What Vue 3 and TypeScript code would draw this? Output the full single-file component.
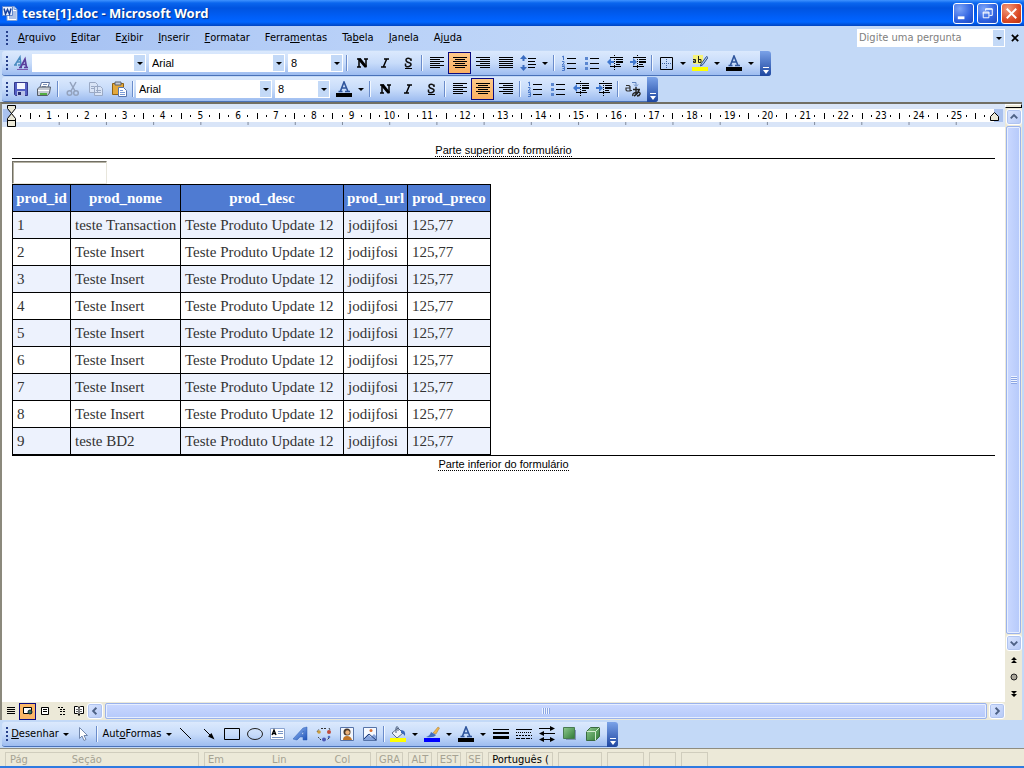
<script setup lang="ts">
interface Menu { label: string; key: number }
interface Item {
  kind: 'btn' | 'combo' | 'sep' | 'text'
  icon?: string
  label?: string
  value?: string
  size?: string
  drop?: boolean
  on?: boolean
  off?: boolean
  key?: number
}
interface Bar { id: string; name: string; items: Item[] }

const menus: Menu[] = [
  { label: 'Arquivo', key: 0 },
  { label: 'Editar', key: 0 },
  { label: 'Exibir', key: 1 },
  { label: 'Inserir', key: 0 },
  { label: 'Formatar', key: 0 },
  { label: 'Ferramentas', key: 5 },
  { label: 'Tabela', key: 2 },
  { label: 'Janela', key: 0 },
  { label: 'Ajuda', key: 2 },
]

const b = (icon: string, label: string, extra: Partial<Item> = {}): Item => ({ kind: 'btn', icon, label, ...extra })
const sep: Item = { kind: 'sep' }
const combo = (label: string, value: string, size: string): Item => ({ kind: 'combo', label, value, size })

const bars: Bar[] = [
  {
    id: 'format', name: 'Formatação', items: [
      b('styles', 'Estilos'), combo('Estilo', '', 'style'), combo('Fonte', 'Arial', 'font'), combo('Tamanho', '8', 'points'), sep,
      b('bold', 'Negrito'), b('italic', 'Itálico'), b('under', 'Sublinhado'), sep,
      b('left', 'Esquerda'), b('center', 'Centralizar', { on: true }), b('right', 'Direita'), b('justify', 'Justificar'),
      b('spacing', 'Espaçamento', { drop: true }), sep,
      b('numbers', 'Numeração'), b('bullets', 'Marcadores'), b('outdent', 'Diminuir recuo'), b('indent', 'Aumentar recuo'), sep,
      b('border', 'Bordas', { drop: true }), b('mark', 'Realce', { drop: true }), b('color', 'Cor da fonte', { drop: true }),
    ],
  },
  {
    id: 'custom', name: 'Personalizada', items: [
      b('save', 'Salvar'), b('print', 'Imprimir'), sep,
      b('cut', 'Recortar', { off: true }), b('copy', 'Copiar', { off: true }), b('paste', 'Colar'), sep,
      combo('Fonte', 'Arial', 'font'), combo('Tamanho', '8', 'points'), b('color', 'Cor da fonte', { drop: true }), sep,
      b('bold', 'Negrito'), b('italic', 'Itálico'), b('under', 'Sublinhado'), sep,
      b('left', 'Esquerda'), b('center', 'Centralizar', { on: true }), b('right', 'Direita'), sep,
      b('numbers', 'Numeração'), b('bullets', 'Marcadores'), b('outdent', 'Diminuir recuo'), b('indent', 'Aumentar recuo'), sep,
      b('translate', 'Traduzir'),
    ],
  },
]

const drawing: Item[] = [
  { kind: 'text', label: 'Desenhar', key: 0, size: 'short' }, b('pointer', 'Selecionar'), sep,
  { kind: 'text', label: 'AutoFormas', key: 3, size: 'long' },
  b('line', 'Linha'), b('arrow', 'Seta'), b('rect', 'Retângulo'), b('oval', 'Elipse'), b('textbox', 'Caixa de texto'),
  b('wordart', 'WordArt'), b('diagram', 'Diagrama'), b('clip', 'Clip-art'), b('picture', 'Imagem'), sep,
  b('fill', 'Preenchimento', { drop: true }), b('brush', 'Cor da linha', { drop: true }), b('color', 'Cor da fonte', { drop: true }),
  b('weights', 'Estilo da linha'), b('dashes', 'Tracejado'), b('arrows', 'Estilo da seta'), b('shadow', 'Sombra'), b('cube', '3D'),
]

const views = ['normal', 'web', 'page', 'outline', 'book']
const viewNames = ['Normal', 'Layout da Web', 'Impressão', 'Tópicos', 'Leitura']

const marks: string[] = []
for (let i = 1; i < 104; i++) {
  const q = i % 4
  marks.push(q === 0 ? String(i / 4) : q === 2 ? 'tick' : 'dot')
}
const tabs = Array.from({ length: 20 }, (_, i) => `${((i + 1) * 125) / 26}%`)

const heads = ['prod_id', 'prod_nome', 'prod_desc', 'prod_url', 'prod_preco']
const rows = Array.from({ length: 9 }, (_, i) => [
  String(i + 1),
  i === 0 ? 'teste Transaction' : i === 8 ? 'teste BD2' : 'Teste Insert',
  'Teste Produto Update 12',
  'jodijfosi',
  '125,77',
])
</script>

<template>
  <div class="window">
    <svg class="sprite" width="0" height="0" aria-hidden="true">
      <defs>
        <linearGradient id="gG" x1="0" y1="0" x2="1" y2="1"><stop offset="0" stop-color="#8fc98f" /><stop offset="1" stop-color="#2e7a36" /></linearGradient>
        <linearGradient id="gW" x1="0" y1="0" x2="1" y2="1"><stop offset="0" stop-color="#9ec4f8" /><stop offset="1" stop-color="#1c50b8" /></linearGradient>
      </defs>
      <symbol id="word" viewBox="0 0 16 16">
        <path d="M5 1.500h7l3 3v11H5z" fill="#fff" stroke="#7fa0d8" /><path d="M12 1.500v3h3" fill="#d5e2f8" stroke="#7fa0d8" />
        <path d="M11 7h3M11 9h3M7 13h7M7 11h7" stroke="#5b83cc" /><path d="M.5 1.500h10v9H.5z" fill="#e8f0ff" stroke="#5f86cc" />
        <path d="M2 3.500l1.500 5.500L5.500 4.500 7.500 9 9 3.500" fill="none" stroke="#17419c" stroke-width="1.500" />
      </symbol>
      <symbol id="styles" viewBox="0 0 16 16">
        <path d="M1 10h3M5 10h3M2 10L7 2l1 8M4 7h4" fill="none" stroke="#4a8cc0" stroke-width="1.500" />
        <path d="M6 12.500h3M11 12.500h4M7.500 12.500L12 4l1.500 8.500M9.500 9.500h4" fill="none" stroke="#5a3d9c" stroke-width="1.700" />
        <path d="M4 14.500h11" stroke="#7a5ab0" />
      </symbol>
      <symbol id="bold" viewBox="0 0 16 16"><path d="M3 4h4M10 4h4M3 12h4M5 4v8M12 4v8" stroke="#000" fill="none" stroke-width="1.500" /><path d="M4 3.500h3l5.500 7v2h-2L5 6z" /></symbol>
      <symbol id="italic" viewBox="0 0 16 16"><path d="M7 4h5M4 12h5M9.700 4L6.300 12" stroke="#000" stroke-width="1.500" fill="none" /></symbol>
      <symbol id="under" viewBox="0 0 16 16"><path d="M11 6V3.500M5.500 11V8.500M11 5Q10 3.200 8.300 3.200 6 3.200 6 5t2.500 2.400T11 9.500 8.300 11.700 5.500 9.800" stroke="#111" stroke-width="1.500" fill="none" /><path d="M5 13.500h7" stroke="#000" /></symbol>
      <symbol id="left" viewBox="0 0 16 16"><path d="M1 2.500h14M1 4.500h10M1 6.500h14M1 8.500h10M1 10.500h14M1 12.500h10" stroke="#000" /></symbol>
      <symbol id="center" viewBox="0 0 16 16"><path d="M1 2.500h14M3 4.500h10M1 6.500h14M3 8.500h10M1 10.500h14M3 12.500h10" stroke="#000" /></symbol>
      <symbol id="right" viewBox="0 0 16 16"><path d="M1 2.500h14M5 4.500h10M1 6.500h14M5 8.500h10M1 10.500h14M5 12.500h10" stroke="#000" /></symbol>
      <symbol id="justify" viewBox="0 0 16 16"><path d="M1 2.500h14M1 4.500h14M1 6.500h14M1 8.500h14M1 10.500h14M1 12.500h14" stroke="#000" /></symbol>
      <symbol id="spacing" viewBox="0 0 16 16"><path d="M8 3.500h8M8 6.500h7M8 9.500h8M8 12.500h7" stroke="#000" /><path d="M3.500 2v4M3.500 10v4" stroke="#3a6cc0" stroke-width="2" /><path d="M3.500 0L7 4H0zM3.500 16L7 12H0z" fill="#3a6cc0" /></symbol>
      <symbol id="numbers" viewBox="0 0 16 16"><path d="M6 3.500h9M6 8.500h9M6 13.500h9" stroke="#000" /><path d="M1 2l1.500-1v4M1 6.500h2v1.500l-2 2h3M1 11.500h2.500v4H1M1.500 13.500h2" fill="none" stroke="#4a78c8" /></symbol>
      <symbol id="bullets" viewBox="0 0 16 16"><path d="M6 3.500h9M6 8.500h9M6 13.500h9" stroke="#000" /><path d="M1 2h3v3H1zM1 7h3v3H1zM1 12h3v3H1z" fill="#5a86d0" /></symbol>
      <symbol id="outdent" viewBox="0 0 16 16"><path d="M3 2.500h13M9 4.500h7M9 9.500h4M3 11.500h11" stroke="#000" /><path d="M9 7h7" stroke="#000" stroke-width="2" /><path d="M7.500 0v16" stroke="#000" stroke-dasharray="1 1" /><path d="M0 7l4-4v3h3v2H4v3z" fill="#4078d0" /></symbol>
      <symbol id="indent" viewBox="0 0 16 16"><path d="M3 2.500h13M9 4.500h7M9 9.500h4M3 11.500h11" stroke="#000" /><path d="M9 7h7" stroke="#000" stroke-width="2" /><path d="M7.500 0v16" stroke="#000" stroke-dasharray="1 1" /><path d="M7 7L3 3v3H0v2h3v3z" fill="#4078d0" /></symbol>
      <symbol id="border" viewBox="0 0 16 16"><path d="M2.500 2.500h12v12h-12z" fill="none" stroke="#000" /><path d="M8.500 4v10M4 8.500h10" stroke="#3b5f9c" stroke-dasharray="1 1" /></symbol>
      <symbol id="mark" viewBox="0 0 16 16"><path d="M1 0h10v9H1z" fill="#f6f27a" /><path d="M1 4.500h2.500V7.500H1.500V6h2M6.500 1v6.500H9V4.500H6.500" fill="none" stroke="#222" /><path d="M9 9l5.500-7.500 1.500 1L11 9.500 8.500 11z" fill="#b9cbe6" stroke="#2c4f8c" /><path d="M0 12h16v4H0z" fill="#ffff00" /></symbol>
      <symbol id="color" viewBox="0 0 16 16"><path d="M2.500 10.500h4M9 10.500h5M4.500 10L8 1l4 9.500M6 7h4" fill="none" stroke="#2f559c" stroke-width="1.600" /><path d="M0 12h16v4H0z" /></symbol>
      <symbol id="save" viewBox="0 0 16 16"><path d="M1.500 1.500h13v13h-12l-1-1z" fill="#5460c4" stroke="#33388c" /><path d="M4 2h8v6H4z" fill="#f4f6ff" /><path d="M4 10h8v5H4z" fill="#b8c2e8" /><path d="M5 11h3v3H5z" fill="#252a70" /></symbol>
      <symbol id="print" viewBox="0 0 16 16"><path d="M5.500 1.500h8l-2 6h-8z" fill="#fff" stroke="#5a6f9c" /><path d="M7 3.500h4M6 5.500h4" stroke="#7c92bc" /><path d="M1.500 8l2-2h11l-1 6-2 2.500h-10z" fill="#c5cad2" stroke="#545c68" /><path d="M2 9.500h11" stroke="#fff" /><path d="M4 12h7v2H4z" fill="#54ad42" /></symbol>
      <symbol id="cut" viewBox="0 0 16 16"><path d="M5 1l5 9M11 1L6 10" stroke="#93a2bd" stroke-width="1.500" /><circle cx="4.500" cy="12" r="2.300" fill="none" stroke="#93a2bd" stroke-width="1.500" /><circle cx="11" cy="12" r="2.300" fill="none" stroke="#93a2bd" stroke-width="1.500" /></symbol>
      <symbol id="copy" viewBox="0 0 16 16"><path d="M1.500 1.500h6l2 2v8h-8zM6.500 5.500h6l2 2v7h-8z" fill="#d9e4f6" stroke="#9aa9c4" /><path d="M3 5.500h3M3 7.500h3M8 9.500h5M8 11.500h5" stroke="#9aa9c4" /></symbol>
      <symbol id="paste" viewBox="0 0 16 16"><path d="M1.500 2.500h11v11h-11z" fill="#e3a83c" stroke="#8e6114" /><path d="M4 1h6v3H4z" fill="#c7ccd6" stroke="#58606e" /><path d="M7.500 6.500h5l3 3v6h-8z" fill="#fff" stroke="#5875ad" /><path d="M9 9.500h3M9 11.500h5M9 13.500h5" stroke="#7b9bd6" /></symbol>
      <symbol id="translate" viewBox="0 0 16 16"><path d="M1 4.500h3l1 1V10H2L1 9V7h4M5 9.500h2" fill="none" stroke="#333" stroke-width="1.200" /><path d="M7 1.500h4v3M9 3.500l2 2 2-2" fill="none" stroke="#5e82bd" /><path d="M8 8.500h7M11 6v8M8 15q-1-3 3-3.500 4.500-1 4 1.500-.5 2-3 2M14 9q-1 4-5 6" fill="none" stroke="#222" stroke-width="1.400" /></symbol>
      <symbol id="pointer" viewBox="0 0 16 16"><path d="M4.500 1.500v11L7 10l2 4.500 2-1L9 9.500h3.500z" fill="#fff" stroke="#7288ad" /></symbol>
      <symbol id="line" viewBox="0 0 16 16"><path d="M2 2l11 11" stroke="#000" /></symbol>
      <symbol id="arrow" viewBox="0 0 16 16"><path d="M3 3l8 8" stroke="#000" /><path d="M13.500 13.500L7 10.500l3.500-3.500z" /></symbol>
      <symbol id="rect" viewBox="0 0 16 16"><path d="M.5 2.500h15v11H.5z" fill="none" stroke="#000" /></symbol>
      <symbol id="oval" viewBox="0 0 16 16"><ellipse cx="8" cy="8" rx="7.500" ry="5.500" fill="none" stroke="#222" /></symbol>
      <symbol id="textbox" viewBox="0 0 16 16"><path d="M.5 2.500h14v11H.5z" fill="#fff" stroke="#8aa3cf" /><path d="M2 9l2-5 2 5M3 7.500h2" fill="none" stroke="#000" stroke-width="1.300" /><path d="M8 5.500h5M8 7.500h5M2 11.500h11" stroke="#7894c4" /></symbol>
      <symbol id="wordart" viewBox="0 0 16 16"><path d="M0 13L10 2l4-1v13h-4v-3H7l-3 3zM8 8.500h2.500V5z" fill="url(#gW)" stroke="#2c5cb5" stroke-width=".5" fill-rule="evenodd" /></symbol>
      <symbol id="diagram" viewBox="0 0 16 16"><path d="M5 2.500h5M13 2l1 2M13 12l-2 2M5 14l-3-3M1 6l2-3" stroke="#333" stroke-dasharray="2 1" /><circle cx="3" cy="6" r="1.800" fill="#c99b3c" /><circle cx="13" cy="6" r="2" fill="#bf4c3c" /><circle cx="8" cy="13.500" r="2" fill="#4a57b5" /><circle cx="13" cy="11" r="1.300" fill="#5271c2" /></symbol>
      <symbol id="clip" viewBox="0 0 16 16"><path d="M1.500 1.500h13v13h-13z" fill="#f2f5fb" stroke="#5673a8" /><circle cx="8" cy="6" r="3.500" fill="#493728" /><circle cx="8.500" cy="6.500" r="2.200" fill="#eeb27a" /><path d="M4 14q0-4 4-4t5 4z" fill="#c07428" /></symbol>
      <symbol id="picture" viewBox="0 0 16 16"><path d="M1.500 1.500h13v13h-13z" fill="#f5f9ff" stroke="#5673a8" /><path d="M2 12l4-4 3 3 3-3 2 2v4H2z" fill="#85a3dc" /><path d="M2 13l5-5 7 6" fill="none" stroke="#253f78" /><circle cx="9" cy="4.500" r="1.500" fill="#db7035" /></symbol>
      <symbol id="fill" viewBox="0 0 16 16"><path d="M8 2l5 5-6 5-5-5z" fill="#eef2f8" stroke="#5d6c88" /><path d="M6 7V1.500q1.500-2 2 0V5" fill="none" stroke="#495a7a" /><path d="M11 4q5 0 4 6-2-3-4-3z" fill="#3b67b8" /><path d="M0 12h16v4H0z" fill="#ffff00" /></symbol>
      <symbol id="brush" viewBox="0 0 16 16"><path d="M9 7l5-6 1.500 1-3.500 6z" fill="#efb54d" stroke="#a77a30" stroke-width=".5" /><path d="M7 6l5 3q-2 3-10 2 4-1 5-5z" fill="#426dbd" /><path d="M0 12h16v4H0z" fill="#0000ff" /></symbol>
      <symbol id="weights" viewBox="0 0 16 16"><path d="M0 3.500h16" stroke="#000" /><path d="M0 7h16" stroke="#000" stroke-width="2" /><path d="M0 11.500h16" stroke="#000" stroke-width="3" /></symbol>
      <symbol id="dashes" viewBox="0 0 16 16"><path d="M0 3.500h16" stroke="#000" /><path d="M0 6.500h16" stroke="#000" stroke-dasharray="1 1" /><path d="M0 9.500h16" stroke="#000" stroke-dasharray="2 1" /><path d="M0 12.500h16" stroke="#000" stroke-dasharray="4 1" /></symbol>
      <symbol id="arrows" viewBox="0 0 16 16"><path d="M0 2.500h14M2 7.500h14M2 13.500h12" stroke="#000" /><path d="M16 2.500L11 0v5zM0 7.500L5 5v5zM0 13.500L5 11v5zM16 13.500L11 11v5z" /></symbol>
      <symbol id="shadow" viewBox="0 0 16 16"><path d="M4 4h10v10H4z" fill="#7d93b8" /><path d="M1.500 1.500h11v11h-11z" fill="url(#gG)" stroke="#487b52" /></symbol>
      <symbol id="cube" viewBox="0 0 16 16"><path d="M1.500 5.500l4-4h9v9l-4 4h-9z" fill="url(#gG)" stroke="#3a6b42" /><path d="M1.500 5.500h9v9M10.500 5.500l4-4" fill="none" stroke="#d2ecd2" /></symbol>
      <symbol id="normal" viewBox="0 0 16 16"><path d="M4 4.500h8M4 6.500h8M4 8.500h8M4 10.500h8" stroke="#000" /></symbol>
      <symbol id="web" viewBox="0 0 16 16"><path d="M3.500 4.500h8v6h-8z" fill="#fff" stroke="#000" /><circle cx="10" cy="9" r="2" fill="#3e7a5a" stroke="#123" /></symbol>
      <symbol id="page" viewBox="0 0 16 16"><path d="M4.500 4.500h7v7h-7z" fill="#fff" stroke="#000" /><path d="M6 6.500h4M6 8.500h4" stroke="#000" /></symbol>
      <symbol id="outline" viewBox="0 0 16 16"><path d="M4 4.500h5M6 6.500h6M6 8.500h6M6 11.500h6" stroke="#000" stroke-dasharray="2 1" /></symbol>
      <symbol id="book" viewBox="0 0 16 16"><path d="M3.500 3.500h3l1.500 1 1.500-1h3v7h-3L8 12l-1.500-1.500h-3zM8 4.500V13" fill="#fff" stroke="#000" /><path d="M5 6.500h2M9 6.500h2M5 8.500h2M9 8.500h2" stroke="#666" /></symbol>
    </svg>

    <header class="title">
      <svg class="ico"><use href="#word" /></svg>
      <h1>teste[1].doc - Microsoft Word</h1>
      <button class="sys" aria-label="Minimizar"><svg viewBox="0 0 20 20"><path d="M4 13h7v3H4z" fill="#fff" /></svg></button>
      <button class="sys" aria-label="Restaurar"><svg viewBox="0 0 20 20"><path d="M8 7V5h7v7h-3M8 5.500h7" fill="none" stroke="#fff" /><path d="M5.500 8.500h6v6h-6zM5 9.500h7" fill="none" stroke="#fff" /></svg></button>
      <button class="sys close" aria-label="Fechar"><svg viewBox="0 0 20 20"><path d="M5 5l10 10M15 5L5 15" stroke="#fff" stroke-width="2" /></svg></button>
    </header>

    <nav class="menu">
      <i class="grip"></i>
      <button v-for="m in menus" :key="m.label" class="menu-item">{{ m.label.slice(0, m.key) }}<u>{{ m.label[m.key] }}</u>{{ m.label.slice(m.key + 1) }}</button>
      <span class="ask">
        <input type="text" placeholder="Digite uma pergunta" aria-label="Digite uma pergunta" />
        <button class="pick" aria-label="Perguntas"><i class="tri"></i></button>
      </span>
      <button class="shut" aria-label="Fechar documento"><svg viewBox="0 0 10 10"><path d="M1 1l7 7M8 1L1 8" stroke="#000" stroke-width="2" /></svg></button>
    </nav>

    <div v-for="bar in bars" :key="bar.id" class="bar" role="toolbar" :aria-label="bar.name">
      <i class="grip"></i>
      <template v-for="(it, n) in bar.items" :key="n">
        <i v-if="it.kind === 'sep'" class="sep"></i>
        <span v-else-if="it.kind === 'combo'" :class="['combo', it.size]">
          <input type="text" :value="it.value" :aria-label="it.label" />
          <button class="pick" :aria-label="'Abrir ' + it.label"><i class="tri"></i></button>
        </span>
        <button v-else :class="['tool', { on: it.on, drop: it.drop }]" :disabled="it.off" :aria-label="it.label">
          <svg class="ico"><use :href="'#' + it.icon" /></svg><i v-if="it.drop" class="tri"></i>
        </button>
      </template>
      <button class="cap" aria-label="Opções"><svg viewBox="0 0 10 10"><path d="M2 1.500h6" stroke="#fff" /><path d="M2 4h6L5 8z" fill="#fff" /></svg></button>
    </div>

    <main class="work">
      <section class="pane">
        <div class="ruler">
          <div class="scale">
            <span v-for="(m, n) in marks" :key="n"><i v-if="m === 'tick' || m === 'dot'" :class="m"></i><template v-else>{{ m }}</template></span>
          </div>
          <svg class="tabs"><line v-for="t in tabs" :key="t" :x1="t" :x2="t" y1="0" y2="3" stroke="#808a9c" /></svg>
          <svg class="indent-left" viewBox="0 0 11 22"><path d="M1.500.5h8v3l-4 5-4-5zM5.500 8.500l4 5v2h-8v-2zM1.500 15.500h8v6h-8z" fill="#ece9d8" stroke="#000" /></svg>
          <svg class="indent-right" viewBox="0 0 11 9"><path d="M5.500.5l4 4v4h-8v-4z" fill="#ece9d8" stroke="#000" /></svg>
        </div>
        <article class="doc">
          <p class="edge top"><span>Parte superior do formulário</span></p>
          <input class="field" type="text" aria-label="Campo do formulário" />
          <table>
            <colgroup><col class="c1" /><col class="c2" /><col class="c3" /><col class="c4" /><col class="c5" /></colgroup>
            <thead><tr><th v-for="h in heads" :key="h" scope="col">{{ h }}</th></tr></thead>
            <tbody><tr v-for="r in rows" :key="r[0]"><td v-for="(c, n) in r" :key="n">{{ c }}</td></tr></tbody>
          </table>
          <p class="edge bottom"><span>Parte inferior do formulário</span></p>
        </article>
        <footer class="hbar">
          <button v-for="(v, n) in views" :key="v" :class="['view', { on: v === 'web' }]" :aria-label="viewNames[n]"><svg class="ico"><use :href="'#' + v" /></svg></button>
          <button class="step" aria-label="Rolar à esquerda"><svg viewBox="0 0 15 15"><path d="M9 4L5.500 7.500 9 11" /></svg></button>
          <div class="thumb across"><i></i></div>
          <button class="step" aria-label="Rolar à direita"><svg viewBox="0 0 15 15"><path d="M6 4l3.500 3.500L6 11" /></svg></button>
        </footer>
      </section>
      <aside class="vbar">
        <i class="split"></i>
        <button class="step" aria-label="Rolar para cima"><svg viewBox="0 0 15 15"><path d="M4 9l3.500-3.500L11 9" /></svg></button>
        <div class="thumb down"><i></i></div>
        <button class="step" aria-label="Rolar para baixo"><svg viewBox="0 0 15 15"><path d="M4 6l3.500 3.500L11 6" /></svg></button>
        <button class="jump" aria-label="Anterior"><svg viewBox="0 0 16 16"><path d="M8 5l3 3H5zM8 8l3 3H5z" /></svg></button>
        <button class="jump" aria-label="Selecionar objeto"><svg viewBox="0 0 16 16"><circle cx="8" cy="8" r="3" fill="#aaa69a" stroke="#222" /></svg></button>
        <button class="jump" aria-label="Próximo"><svg viewBox="0 0 16 16"><path d="M8 8L5 5h6zM8 11L5 8h6z" /></svg></button>
      </aside>
    </main>

    <div class="bar draw" role="toolbar" aria-label="Desenho">
      <i class="grip"></i>
      <template v-for="(it, n) in drawing" :key="n">
        <i v-if="it.kind === 'sep'" class="sep"></i>
        <button v-else-if="it.kind === 'text'" :class="['word', it.size]"><span>{{ it.label!.slice(0, it.key) }}<u>{{ it.label![it.key!] }}</u>{{ it.label!.slice(it.key! + 1) }}</span><i class="tri"></i></button>
        <button v-else :class="['tool', { drop: it.drop }]" :aria-label="it.label">
          <svg class="ico"><use :href="'#' + it.icon" /></svg><i v-if="it.drop" class="tri"></i>
        </button>
      </template>
      <button class="cap" aria-label="Opções"><svg viewBox="0 0 10 10"><path d="M2 1.500h6" stroke="#fff" /><path d="M2 4h6L5 8z" fill="#fff" /></svg></button>
    </div>

    <footer class="status">
      <div class="cell wide"><span>Pág</span><span>Seção</span></div>
      <div class="cell spot"><span>Em</span><span>Lin</span><span>Col</span></div>
      <div class="cell mode">GRA</div>
      <div class="cell slim">ALT</div>
      <div class="cell slim">EST</div>
      <div class="cell tiny">SE</div>
      <div class="cell lang">Português (</div>
      <div class="cell blank"></div>
      <div class="cell half"></div>
      <div class="cell mode"></div>
      <div class="cell mode"></div>
    </footer>
  </div>
</template>

<style>
html, body, #app { height: 100%; }
body { margin: 0; overflow: hidden; }
</style>

<style scoped>
* { box-sizing: border-box; }
.window { display: flex; flex-direction: column; height: 100%; background: #c3d9f7; color: #000; font: 11px/14px "DejaVu Sans Condensed", "DejaVu Sans", sans-serif; }
.sprite { position: absolute; }
button { border: 0; padding: 0; margin: 0; background: none; color: inherit; font: inherit; display: flex; align-items: center; justify-content: center; flex: none; }
input { border: 0; padding: 0; margin: 0; font: inherit; color: inherit; min-width: 0; outline: 0; border-radius: 0; }
svg { display: block; flex: none; }
.ico { width: 16px; height: 16px; }
u { text-decoration: underline; text-underline-offset: 1px; }

.title { display: flex; align-items: center; gap: 2px; height: 26px; flex: none; padding: 0 2px; background: linear-gradient(#3f93ff 0, #0a66ee 3px, #0054e0 8px, #0060fa 18px, #0066ff 22px, #0044c0 26px); }
.title h1 { flex: 1; margin: 0; padding-left: 2px; font: bold 13px/18px "Noto Sans", sans-serif; color: #fff; text-shadow: 1px 1px 1px #0a2f80; white-space: nowrap; }
.sys { width: 21px; height: 21px; margin-left: 1px; border: 1px solid #fff; border-radius: 3px; background: radial-gradient(circle at 30% 25%, #7ca4f8, #2f62e0 60%, #1c48c0); }
.sys.close { background: radial-gradient(circle at 30% 25%, #f09a7c, #dc4a26 60%, #b8320c); }
.sys svg { width: 19px; height: 19px; }

.menu { display: flex; align-items: center; height: 24px; flex: none; padding: 0 2px 0 6px; background: linear-gradient(90deg, #a3bff1, #b9d1f8 35%, #c3d9f7 70%); }
.grip { flex: none; width: 2px; height: 14px; margin-right: 1px; background: repeating-linear-gradient(#27408b 0, #27408b 2px, transparent 2px, transparent 4px); }
.menu .grip { margin-right: 2px; }
.menu-item { padding: 0 7px 0 8px; }
.ask { display: flex; width: 148px; height: 18px; margin: 0 3px 0 auto; background: #fff; border: 1px solid #fff; }
.ask input { flex: 1; padding: 0 1px; background: #fff; }
.ask input::placeholder { color: #808080; opacity: 1; }
.pick { width: 11px; background: #c3d9f7; }
.tri { width: 0; height: 0; border: 3px solid transparent; border-top-color: #000; border-bottom: 0; flex: none; }
.shut { width: 14px; height: 14px; }
.shut svg { width: 9px; height: 9px; }

.bar { display: flex; align-items: center; align-self: flex-start; height: 25px; margin: 1px 0 0 2px; flex: none; padding-left: 4px; border-radius: 3px; background: linear-gradient(#dbe9fd, #c8dcfa 50%, #9dbcf0); border-bottom: 1px solid #4a72b8; }
.tool { width: 23px; height: 22px; }
.tool.drop { width: 34px; justify-content: flex-start; padding-left: 3px; }
.tool.drop .tri { margin-left: 6px; }
.tool.on { border: 1px solid #0a0a80; background: linear-gradient(#fdc98a, #fbb060); }
.sep { flex: none; width: 2px; height: 16px; margin: 0 2px; border-left: 1px solid #6a8ccb; border-right: 1px solid #f1f7ff; }
.combo { display: flex; height: 18px; margin-right: 3px; background: #fff; border: 1px solid #fff; }
.combo + .sep { margin-left: 0; }
.combo input { flex: 1; padding-left: 2px; background: #fff; font: 11px/14px "Liberation Sans", Arial, sans-serif; }
.style { width: 114px; }
.font { width: 136px; }
.points { width: 55px; }
.cap { align-self: stretch; width: 11px; margin: 0 0 -1px 3px; align-items: flex-end; border-radius: 0 3px 3px 0; background: linear-gradient(#7aa2e8, #1d46a0); }
.cap svg { width: 10px; height: 10px; }

.work { display: flex; flex: 1; min-height: 0; border-top: 2px solid #716f64; border-left: 2px solid #8b897c; background: #fff; margin: 0 2px 0 0; }
.pane { display: flex; flex-direction: column; flex: 1; min-width: 0; }
.ruler { position: relative; flex: none; height: 23px; padding: 5px 11px 0 10px; background: #d9e5f8; overflow: hidden; }
.scale { display: flex; align-items: center; height: 13px; padding: 0 5px 0 4px; background: #fff; box-shadow: -9px 0 #a9c1ee, 9px 0 #a9c1ee; }
.scale span { display: flex; flex: 1 1 0; min-width: 0; justify-content: center; font-size: 10px; line-height: 13px; }
.tick { width: 1px; height: 6px; background: #000; }
.dot { width: 1px; height: 2px; background: #000; }
.tabs { width: 100%; height: 4px; }
.indent-left { position: absolute; left: 4px; top: 1px; width: 11px; height: 22px; }
.indent-right { position: absolute; right: 5px; top: 8px; width: 11px; height: 9px; }
.doc { flex: 1; min-height: 0; padding: 16px 10px 0; overflow: hidden; }
.edge { margin: 0; text-align: center; font: 11px/14px "Liberation Sans", Arial, sans-serif; }
.edge span { border-bottom: 1px dotted #000; }
.edge.top { padding-bottom: 1px; border-bottom: 1px solid #000; }
.edge.bottom { border-top: 1px solid #000; padding-top: 1px; }
.field { display: block; width: 95px; height: 23px; margin: 2px 0 0; border: 1px solid #e8e6dc; border-top-color: #716f64; border-left-color: #716f64; box-shadow: inset 1px 1px #b5b2a4; }
table { border-collapse: collapse; table-layout: fixed; width: 479px; font: 15px/20px "Liberation Serif", serif; color: #333; }
.c1 { width: 58px; } .c2 { width: 110px; } .c3 { width: 163px; } .c4 { width: 64px; } .c5 { width: 83px; }
th, td { height: 27px; padding: 0 0 0 4px; border: 1px solid #000; text-align: left; white-space: nowrap; }
th { padding: 0; text-align: center; color: #fff; background: #4f7bd2; }
tbody tr:nth-child(odd) { background: #edf2fd; }

.hbar { display: flex; align-items: center; flex: none; height: 18px; background: #ece9d8; }
.view { width: 17px; height: 17px; }
.view.on { border: 1px solid #0a0a80; background: #fbb868; }
.step { width: 16px; height: 16px; border: 1px solid #fff; border-radius: 3px; background: linear-gradient(135deg, #dbe6ff, #b4c8f6); box-shadow: inset 0 0 0 1px #b0c4f0; }
.step svg { width: 14px; height: 14px; fill: none; stroke: #4d6185; stroke-width: 2; }
.thumb { display: flex; align-items: center; justify-content: center; flex: 1; border: 1px solid #9ab2ec; border-radius: 2px; box-shadow: inset 0 0 0 1px #e6eeff; }
.across { height: 16px; margin: 0 2px; background: linear-gradient(#cad8ff, #b5c9fa); }
.across i { width: 8px; height: 6px; background: repeating-linear-gradient(90deg, #eef4ff 0, #eef4ff 1px, #8ca6e4 1px, #8ca6e4 2px); }
.vbar { display: flex; flex-direction: column; align-items: center; flex: none; width: 17px; background: #ece9d8; }
.split { width: 17px; height: 4px; flex: none; margin-bottom: 1px; background: #ece9d8; border: 1px solid #000; border-top-color: #fff; border-left-color: #fff; }
.down { width: 15px; margin: 1px 0; background: linear-gradient(90deg, #cad8ff, #b5c9fa); }
.down i { width: 6px; height: 8px; background: repeating-linear-gradient(#eef4ff 0, #eef4ff 1px, #8ca6e4 1px, #8ca6e4 2px); }
.jump { width: 17px; height: 17px; }
.jump svg { width: 16px; height: 16px; }
.jump:last-child { margin-bottom: 18px; }

.draw { margin: 2px 0 1px 2px; }
.word { gap: 4px; }
.short { width: 62px; }
.long { width: 74px; }
.status { display: flex; gap: 5px; flex: none; height: 20px; padding: 3px 5px 0; background: #ece9d8; border-top: 1px solid #8f8d80; border-bottom: 2px solid #2f7ae0; color: #a5a292; }
.cell { border: 1px solid #d0cdbd; border-bottom: 0; height: 14px; line-height: 13px; text-align: center; display: flex; justify-content: center; white-space: nowrap; }
.wide { width: 194px; justify-content: flex-start; gap: 44px; padding-left: 4px; }
.spot { width: 167px; justify-content: flex-start; gap: 48px; padding-left: 3px; }
.mode { width: 27px; }
.slim { width: 24px; }
.tiny { width: 17px; }
.lang { width: 65px; color: #000; }
.blank { width: 44px; }
.half { width: 37px; }
</style>
